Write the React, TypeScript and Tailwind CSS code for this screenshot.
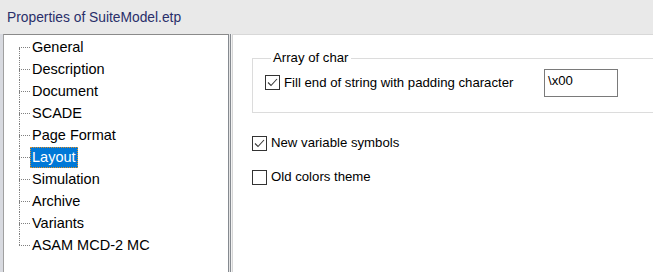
import React from "react";

const items = [
  "General",
  "Description",
  "Document",
  "SCADE",
  "Page Format",
  "Layout",
  "Simulation",
  "Archive",
  "Variants",
  "ASAM MCD-2 MC",
];

function Check({ checked }: { checked: boolean }) {
  return (
    <div className="w-[15px] h-[15px] border border-[#333333] bg-white flex items-center justify-center shrink-0">
      {checked && (
        <svg width="13" height="13" viewBox="0 0 13 13">
          <polyline points="2,6.5 5,9.5 11,3" fill="none" stroke="#3a3a3a" strokeWidth="1.1" />
        </svg>
      )}
    </div>
  );
}

export default function App() {
  return (
    <div className="w-[653px] h-[272px] bg-[#e9e9e9] flex flex-col overflow-hidden font-['Liberation_Sans',Arial,sans-serif] text-[13.2px] text-black">
      <div className="h-[34px] shrink-0 flex items-center pl-[7px] pt-[2px] text-[13.8px] text-[#2a2f6a]">
        Properties of SuiteModel.etp
      </div>
      <div className="flex flex-1 min-h-0">
        <div className="w-[3px] bg-[#d8dae0] shrink-0" />
        <div className="w-[226px] shrink-0 bg-white border-l border-t border-r border-l-[#a0a0a0] border-t-[#8a8a8a] border-r-[#858a90] pt-[1px] pl-[15px] text-[14.5px]">
          {items.map((label, i) => {
            const first = i === 0;
            const last = i === items.length - 1;
            const sel = label === "Layout";
            return (
              <div key={label} className="h-[22px] flex items-center">
                <div className="w-[11px] h-full flex flex-col shrink-0">
                  <div className={first ? "h-[11px]" : "h-[11px] border-l border-dotted border-[#808080]"} />
                  <div className="h-0 border-t border-dotted border-[#808080]" />
                  <div className={last ? "flex-1" : "flex-1 border-l border-dotted border-[#808080]"} />
                </div>
                <div
                  className={
                    sel
                      ? "h-[21px] flex items-center px-[1px] pt-[1px] border border-dotted border-[#e0902a] bg-[#0078d7] text-white"
                      : "h-[21px] flex items-center px-[1px] pt-[1px] border border-transparent"
                  }
                >
                  {label}
                </div>
              </div>
            );
          })}
        </div>
        <div className="w-[4px] shrink-0 flex">
          <div className="w-[1px] bg-[#e4e4e4]" />
          <div className="w-[1px] bg-[#858a90]" />
          <div className="w-[1px] bg-[#f2f2f2]" />
          <div className="w-[1px] bg-[#d6d6d6]" />
        </div>
        <div className="flex-1 bg-white border-t border-[#d8d8d8] overflow-hidden pl-[19px]">
          <fieldset className="mt-[15px] w-[420px] border border-[#dcdcdc] pl-[12px] pt-[3px] pb-[15px]">
            <legend className="ml-[6px] px-[2px] leading-[16px]">Array of char</legend>
            <div className="flex items-center h-[28px]">
              <div className="w-[279px] flex items-center">
                <Check checked />
                <span className="ml-[4px]">Fill end of string with padding character</span>
              </div>
              <div className="w-[74px] h-[28px] border border-[#7a7a7a] pl-[3px] pt-[3px] leading-[16px]">
                \x00
              </div>
            </div>
          </fieldset>
          <div className="mt-[22px] flex items-center h-[16px]">
            <Check checked />
            <span className="ml-[4px]">New variable symbols</span>
          </div>
          <div className="mt-[18px] flex items-center h-[16px]">
            <Check checked={false} />
            <span className="ml-[4px]">Old colors theme</span>
          </div>
        </div>
      </div>
    </div>
  );
}
